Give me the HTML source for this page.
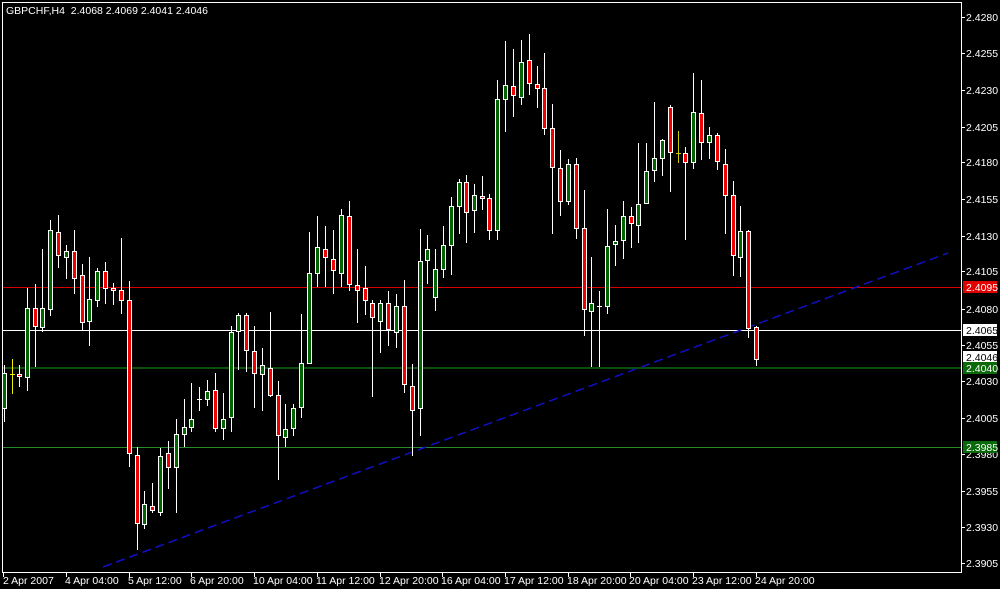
<!DOCTYPE html>
<html><head><meta charset="utf-8"><style>
html,body{margin:0;padding:0;background:#000;width:1000px;height:589px;overflow:hidden}
svg{display:block}
text{font-family:"Liberation Sans",sans-serif;font-size:10.5px;fill:#fff}
</style></head><body>
<svg width="1000" height="589" viewBox="0 0 1000 589" xmlns="http://www.w3.org/2000/svg">
<rect width="1000" height="589" fill="#000"/>
<g shape-rendering="crispEdges">
<line x1="3" y1="287.5" x2="961" y2="287.5" stroke="#d80000"/>
<line x1="3" y1="330.5" x2="961" y2="330.5" stroke="#fff"/>
<line x1="3" y1="368" x2="961" y2="368" stroke="#0c500c" stroke-width="2"/>
<line x1="3" y1="447.5" x2="961" y2="447.5" stroke="#2a8a2a"/>
</g>
<line x1="103" y1="567" x2="948" y2="253" stroke="#1010c8" stroke-width="1.5" stroke-dasharray="9,5"/>
<g stroke="#fff" stroke-width="1" shape-rendering="crispEdges">
<g id="w">
<line x1="4.5" y1="365" x2="4.5" y2="422"/><line x1="12.5" y1="359" x2="12.5" y2="394" stroke="#ee0"/><line x1="19.5" y1="365" x2="19.5" y2="387"/><line x1="27.5" y1="288" x2="27.5" y2="391"/><line x1="35.5" y1="284" x2="35.5" y2="367"/><line x1="42.5" y1="249" x2="42.5" y2="332"/><line x1="50.5" y1="220" x2="50.5" y2="316"/><line x1="58.5" y1="215" x2="58.5" y2="268"/><line x1="66.5" y1="245" x2="66.5" y2="279"/><line x1="74.5" y1="230" x2="74.5" y2="294"/><line x1="82.5" y1="264" x2="82.5" y2="330"/><line x1="89.5" y1="257" x2="89.5" y2="346"/><line x1="97.5" y1="268" x2="97.5" y2="307"/><line x1="105.5" y1="262" x2="105.5" y2="304"/><line x1="113.5" y1="283" x2="113.5" y2="305"/><line x1="121.5" y1="238" x2="121.5" y2="314"/><line x1="129.5" y1="281" x2="129.5" y2="467"/><line x1="137.5" y1="447" x2="137.5" y2="550"/><line x1="144.5" y1="491" x2="144.5" y2="529"/><line x1="152.5" y1="483" x2="152.5" y2="513"/><line x1="160.5" y1="448" x2="160.5" y2="516"/><line x1="168.5" y1="441" x2="168.5" y2="489"/><line x1="176.5" y1="419" x2="176.5" y2="513"/><line x1="184.5" y1="399" x2="184.5" y2="447"/><line x1="191.5" y1="383" x2="191.5" y2="432"/><line x1="199.5" y1="387" x2="199.5" y2="411"/><line x1="207.5" y1="380" x2="207.5" y2="406"/><line x1="215.5" y1="373" x2="215.5" y2="432"/><line x1="223.5" y1="393" x2="223.5" y2="440"/><line x1="231.5" y1="326" x2="231.5" y2="432"/><line x1="238.5" y1="313" x2="238.5" y2="370"/><line x1="246.5" y1="313" x2="246.5" y2="372"/><line x1="254.5" y1="326" x2="254.5" y2="408"/><line x1="262.5" y1="348" x2="262.5" y2="411"/><line x1="270.5" y1="312" x2="270.5" y2="397"/><line x1="278.5" y1="381" x2="278.5" y2="480"/><line x1="285.5" y1="404" x2="285.5" y2="447"/><line x1="293.5" y1="404" x2="293.5" y2="436"/><line x1="301.5" y1="314" x2="301.5" y2="418"/><line x1="309.5" y1="232" x2="309.5" y2="364"/><line x1="317.5" y1="216" x2="317.5" y2="287"/><line x1="325.5" y1="226" x2="325.5" y2="287"/><line x1="333.5" y1="230" x2="333.5" y2="294"/><line x1="341.5" y1="209" x2="341.5" y2="287"/><line x1="349.5" y1="201" x2="349.5" y2="291"/><line x1="357.5" y1="249" x2="357.5" y2="323"/><line x1="365.5" y1="266" x2="365.5" y2="315"/><line x1="372.5" y1="300" x2="372.5" y2="397"/><line x1="380.5" y1="300" x2="380.5" y2="353"/><line x1="388.5" y1="291" x2="388.5" y2="346"/><line x1="396.5" y1="294" x2="396.5" y2="348"/><line x1="404.5" y1="280" x2="404.5" y2="393"/><line x1="412.5" y1="364" x2="412.5" y2="456"/><line x1="420.5" y1="229" x2="420.5" y2="436"/><line x1="427.5" y1="235" x2="427.5" y2="284"/><line x1="435.5" y1="249" x2="435.5" y2="311"/><line x1="443.5" y1="226" x2="443.5" y2="278"/><line x1="451.5" y1="197" x2="451.5" y2="275"/><line x1="459.5" y1="179" x2="459.5" y2="234"/><line x1="466.5" y1="175" x2="466.5" y2="243"/><line x1="474.5" y1="184" x2="474.5" y2="233"/><line x1="482.5" y1="176" x2="482.5" y2="210"/><line x1="489.5" y1="194" x2="489.5" y2="240"/><line x1="497.5" y1="80" x2="497.5" y2="240"/><line x1="505.5" y1="41" x2="505.5" y2="132"/><line x1="513.5" y1="49" x2="513.5" y2="117"/><line x1="521.5" y1="40" x2="521.5" y2="105"/><line x1="529.5" y1="34" x2="529.5" y2="95"/><line x1="537.5" y1="66" x2="537.5" y2="108"/><line x1="544.5" y1="53" x2="544.5" y2="135"/><line x1="552.5" y1="104" x2="552.5" y2="234"/><line x1="560.5" y1="150" x2="560.5" y2="216"/><line x1="568.5" y1="159" x2="568.5" y2="205"/><line x1="576.5" y1="158" x2="576.5" y2="239"/><line x1="584.5" y1="190" x2="584.5" y2="336"/><line x1="591.5" y1="257" x2="591.5" y2="367"/><line x1="599.5" y1="291" x2="599.5" y2="367"/><line x1="607.5" y1="209" x2="607.5" y2="314"/><line x1="615.5" y1="225" x2="615.5" y2="266"/><line x1="623.5" y1="201" x2="623.5" y2="259"/><line x1="631.5" y1="207" x2="631.5" y2="248"/><line x1="638.5" y1="143" x2="638.5" y2="243"/><line x1="646.5" y1="143" x2="646.5" y2="203"/><line x1="654.5" y1="102" x2="654.5" y2="182"/><line x1="662.5" y1="139" x2="662.5" y2="176"/><line x1="670.5" y1="105" x2="670.5" y2="192"/><line x1="678.5" y1="131" x2="678.5" y2="163" stroke="#cc0"/><line x1="685.5" y1="147" x2="685.5" y2="240"/><line x1="693.5" y1="73" x2="693.5" y2="169"/><line x1="701.5" y1="80" x2="701.5" y2="160"/><line x1="709.5" y1="127" x2="709.5" y2="159"/><line x1="717.5" y1="133" x2="717.5" y2="170"/><line x1="725.5" y1="149" x2="725.5" y2="234"/><line x1="733.5" y1="181" x2="733.5" y2="276"/><line x1="740.5" y1="206" x2="740.5" y2="277"/><line x1="748.5" y1="230" x2="748.5" y2="338"/><line x1="756.5" y1="326" x2="756.5" y2="366"/>
</g>
<line x1="10" y1="374.5" x2="15" y2="374.5" stroke="#ee0"/><line x1="197" y1="399.5" x2="202" y2="399.5"/><line x1="597" y1="306.5" x2="602" y2="306.5"/><line x1="676" y1="153.5" x2="681" y2="153.5" stroke="#cc0"/>
<g fill="#006400">
<rect x="2.5" y="373.5" width="4" height="35"/><rect x="25.5" y="308.5" width="4" height="69"/><rect x="40.5" y="308.5" width="4" height="19"/><rect x="48.5" y="230.5" width="4" height="79"/><rect x="64.5" y="251.5" width="4" height="6"/><rect x="87.5" y="299.5" width="4" height="22"/><rect x="95.5" y="271.5" width="4" height="29"/><rect x="142.5" y="504.5" width="4" height="20"/><rect x="158.5" y="456.5" width="4" height="56"/><rect x="174.5" y="434.5" width="4" height="33"/><rect x="182.5" y="427.5" width="4" height="7"/><rect x="189.5" y="419.5" width="4" height="8"/><rect x="205.5" y="391.5" width="4" height="8"/><rect x="221.5" y="419.5" width="4" height="9"/><rect x="229.5" y="332.5" width="4" height="85"/><rect x="236.5" y="315.5" width="4" height="16"/><rect x="260.5" y="365.5" width="4" height="9"/><rect x="283.5" y="429.5" width="4" height="8"/><rect x="291.5" y="408.5" width="4" height="20"/><rect x="299.5" y="363.5" width="4" height="44"/><rect x="307.5" y="273.5" width="4" height="90"/><rect x="315.5" y="247.5" width="4" height="26"/><rect x="339.5" y="215.5" width="4" height="58"/><rect x="378.5" y="303.5" width="4" height="18"/><rect x="394.5" y="306.5" width="4" height="26"/><rect x="418.5" y="261.5" width="4" height="147"/><rect x="425.5" y="249.5" width="4" height="11"/><rect x="433.5" y="269.5" width="4" height="28"/><rect x="441.5" y="245.5" width="4" height="24"/><rect x="449.5" y="206.5" width="4" height="39"/><rect x="457.5" y="182.5" width="4" height="24"/><rect x="472.5" y="195.5" width="4" height="15"/><rect x="495.5" y="99.5" width="4" height="131"/><rect x="503.5" y="85.5" width="4" height="14"/><rect x="519.5" y="62.5" width="4" height="35"/><rect x="566.5" y="164.5" width="4" height="37"/><rect x="589.5" y="303.5" width="4" height="8"/><rect x="605.5" y="246.5" width="4" height="60"/><rect x="613.5" y="241.5" width="4" height="3"/><rect x="621.5" y="216.5" width="4" height="24"/><rect x="636.5" y="204.5" width="4" height="21"/><rect x="644.5" y="171.5" width="4" height="32"/><rect x="652.5" y="158.5" width="4" height="12"/><rect x="660.5" y="140.5" width="4" height="18"/><rect x="691.5" y="112.5" width="4" height="50"/><rect x="707.5" y="135.5" width="4" height="7"/><rect x="738.5" y="231.5" width="4" height="26"/>
</g>
<g fill="#f00000">
<rect x="17.5" y="374.5" width="4" height="2"/><rect x="33.5" y="308.5" width="4" height="18"/><rect x="56.5" y="232.5" width="4" height="23"/><rect x="72.5" y="251.5" width="4" height="27"/><rect x="80.5" y="275.5" width="4" height="47"/><rect x="103.5" y="271.5" width="4" height="17"/><rect x="111.5" y="288.5" width="4" height="2"/><rect x="119.5" y="290.5" width="4" height="10"/><rect x="127.5" y="300.5" width="4" height="153"/><rect x="135.5" y="455.5" width="4" height="68"/><rect x="150.5" y="506.5" width="4" height="4"/><rect x="166.5" y="453.5" width="4" height="14"/><rect x="213.5" y="390.5" width="4" height="38"/><rect x="244.5" y="315.5" width="4" height="35"/><rect x="252.5" y="351.5" width="4" height="22"/><rect x="268.5" y="368.5" width="4" height="27"/><rect x="276.5" y="395.5" width="4" height="40"/><rect x="323.5" y="249.5" width="4" height="8"/><rect x="331.5" y="259.5" width="4" height="11"/><rect x="347.5" y="216.5" width="4" height="68"/><rect x="355.5" y="285.5" width="4" height="5"/><rect x="363.5" y="288.5" width="4" height="12"/><rect x="370.5" y="303.5" width="4" height="14"/><rect x="386.5" y="303.5" width="4" height="26"/><rect x="402.5" y="306.5" width="4" height="78"/><rect x="410.5" y="386.5" width="4" height="24"/><rect x="464.5" y="182.5" width="4" height="30"/><rect x="480.5" y="196.5" width="4" height="2"/><rect x="487.5" y="198.5" width="4" height="32"/><rect x="511.5" y="86.5" width="4" height="9"/><rect x="527.5" y="60.5" width="4" height="23"/><rect x="535.5" y="84.5" width="4" height="4"/><rect x="542.5" y="88.5" width="4" height="40"/><rect x="550.5" y="128.5" width="4" height="39"/><rect x="558.5" y="168.5" width="4" height="33"/><rect x="574.5" y="164.5" width="4" height="64"/><rect x="582.5" y="228.5" width="4" height="81"/><rect x="629.5" y="216.5" width="4" height="7"/><rect x="668.5" y="107.5" width="4" height="45"/><rect x="683.5" y="153.5" width="4" height="9"/><rect x="699.5" y="113.5" width="4" height="29"/><rect x="715.5" y="135.5" width="4" height="26"/><rect x="723.5" y="164.5" width="4" height="31"/><rect x="731.5" y="195.5" width="4" height="60"/><rect x="746.5" y="231.5" width="4" height="97"/><rect x="754.5" y="327.5" width="4" height="32"/>
</g>
<line x1="2.5" y1="2" x2="2.5" y2="573"/><line x1="2" y1="2.5" x2="962" y2="2.5"/><line x1="961.5" y1="2" x2="961.5" y2="573"/><line x1="2" y1="572.5" x2="962" y2="572.5"/>
<path d="M962 17.5h3M962 53.5h3M962 90.5h3M962 127.5h3M962 162.5h3M962 199.5h3M962 236.5h3M962 271.5h3M962 309.5h3M962 345.5h3M962 381.5h3M962 418.5h3M962 454.5h3M962 491.5h3M962 527.5h3M962 563.5h3"/>
<path d="M3.5 573v4M66.5 573v4M129.5 573v4M191.5 573v4M254.5 573v4M317.5 573v4M380.5 573v4M442.5 573v4M505.5 573v4M568.5 573v4M630.5 573v4M693.5 573v4M756.5 573v4"/>
</g>
<text x="6" y="14" xml:space="preserve">GBPCHF,H4  2.4068 2.4069 2.4041 2.4046</text>
<g>
<text x="966" y="21">2.4280</text><text x="966" y="57">2.4255</text><text x="966" y="94">2.4230</text><text x="966" y="131">2.4205</text><text x="966" y="166">2.4180</text><text x="966" y="203">2.4155</text><text x="966" y="240">2.4130</text><text x="966" y="275">2.4105</text><text x="966" y="313">2.4080</text><text x="966" y="349">2.4055</text><text x="966" y="385">2.4030</text><text x="966" y="422">2.4005</text><text x="966" y="458">2.3980</text><text x="966" y="495">2.3955</text><text x="966" y="531">2.3930</text><text x="966" y="567">2.3905</text>
</g>
<rect x="963" y="281" width="34" height="12" fill="#e00000"/><text x="966" y="291">2.4095</text>
<rect x="963" y="324" width="34" height="12" fill="#fff"/><text x="966" y="334" style="fill:#000">2.4065</text>
<rect x="963" y="351" width="34" height="11" fill="#fff"/><text x="966" y="361" style="fill:#000">2.4046</text>
<rect x="963" y="362" width="34" height="12" fill="#0a6a0a"/><text x="966" y="372">2.4040</text>
<rect x="963" y="441" width="34" height="12" fill="#0a6a0a"/><text x="966" y="451">2.3985</text>
<g>
<text x="3" y="584">2 Apr 2007</text><text x="65" y="584">4 Apr 04:00</text><text x="128" y="584">5 Apr 12:00</text><text x="190" y="584">6 Apr 20:00</text><text x="253" y="584">10 Apr 04:00</text><text x="316" y="584">11 Apr 12:00</text><text x="379" y="584">12 Apr 20:00</text><text x="441" y="584">16 Apr 04:00</text><text x="504" y="584">17 Apr 12:00</text><text x="567" y="584">18 Apr 20:00</text><text x="629" y="584">20 Apr 04:00</text><text x="692" y="584">23 Apr 12:00</text><text x="755" y="584">24 Apr 20:00</text>
</g>
</svg>
</body></html>
